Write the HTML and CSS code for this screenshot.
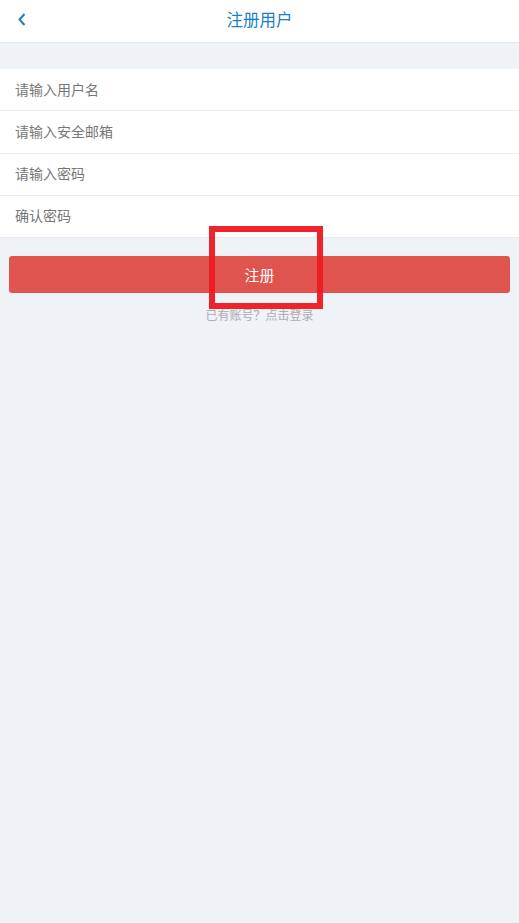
FILE: index.html
```html
<!DOCTYPE html>
<html lang="zh-CN">
<head>
<meta charset="utf-8">
<title>注册用户</title>
<link rel="stylesheet" href="styles.css">
</head>
<body>
<div class="page">
  <header class="topbar">
    <a class="back" href="#" aria-label="返回">
      <svg width="8" height="13" viewBox="0 0 8 13"><path d="M6.5 1 L1.5 6.5 L6.5 12" fill="none" stroke="#1a7fc7" stroke-width="2"/></svg>
    </a>
    <h1 class="title">注册用户</h1>
  </header>
  <div class="spacer"></div>
  <form class="form">
    <div class="row"><input class="field" type="text" placeholder="请输入用户名"></div>
    <div class="row"><input class="field" type="text" placeholder="请输入安全邮箱"></div>
    <div class="row"><input class="field" type="password" placeholder="请输入密码"></div>
    <div class="row"><input class="field" type="password" placeholder="确认密码"></div>
  </form>
  <div class="actions">
    <button class="submit" type="button">注册</button>
    <p class="login-link">已有账号？点击登录</p>
    <div class="highlight"></div>
  </div>
</div>
</body>
</html>
```

FILE: styles.css
```css
html, body {
  margin: 0;
  padding: 0;
  background: #eff2f7;
  font-family: "Noto Sans CJK SC", "Noto Sans", sans-serif;
}
.page {
  width: 519px;
  min-height: 923px;
  background: #eff2f7;
}
.topbar {
  position: relative;
  height: 42px;
  background: #fff;
  border-bottom: 1px solid #e3e6ea;
  display: flex;
  align-items: center;
  justify-content: center;
}
.back {
  position: absolute;
  left: 18px;
  top: 13px;
  display: block;
  width: 8px;
  height: 13px;
  line-height: 0;
}
.title {
  margin: 0;
  font-size: 16.5px;
  font-weight: normal;
  color: #1a80c4;
  line-height: 22px;
  margin-top: -4px;
}
.spacer {
  height: 26px;
}
.form {
  margin: 0;
  background: #fff;
}
.row {
  height: 42.25px;
  box-sizing: border-box;
  border-bottom: 1px solid #ebedf0;
  display: flex;
  align-items: center;
  padding-left: 15px;
}
.row:last-child {
  border-bottom: 1px solid #e6e9ed;
}
.field {
  border: 0;
  outline: 0;
  padding: 0;
  margin: 0;
  background: transparent;
  font-family: inherit;
  font-size: 14px;
  color: #333;
  width: 100%;
  margin-top: -2px;
}
.field::placeholder {
  color: #777;
}
.actions {
  position: relative;
  padding: 18px 9px 0;
  display: flex;
  flex-direction: column;
  align-items: center;
}
.submit {
  width: 100%;
  height: 37px;
  border: 0;
  border-radius: 3px;
  background: #df544f;
  color: #fff;
  font-family: inherit;
  font-size: 15px;
  padding: 0;
  line-height: 37px;
}
.highlight {
  position: absolute;
  left: 209px;
  top: -12px;
  width: 114px;
  height: 83px;
  box-sizing: border-box;
  border: 6px solid #ed1c24;
  opacity: 0.97;
}
.login-link {
  margin: 14px 0 0;
  font-size: 12px;
  line-height: 16px;
  color: #adadad;
}
```
